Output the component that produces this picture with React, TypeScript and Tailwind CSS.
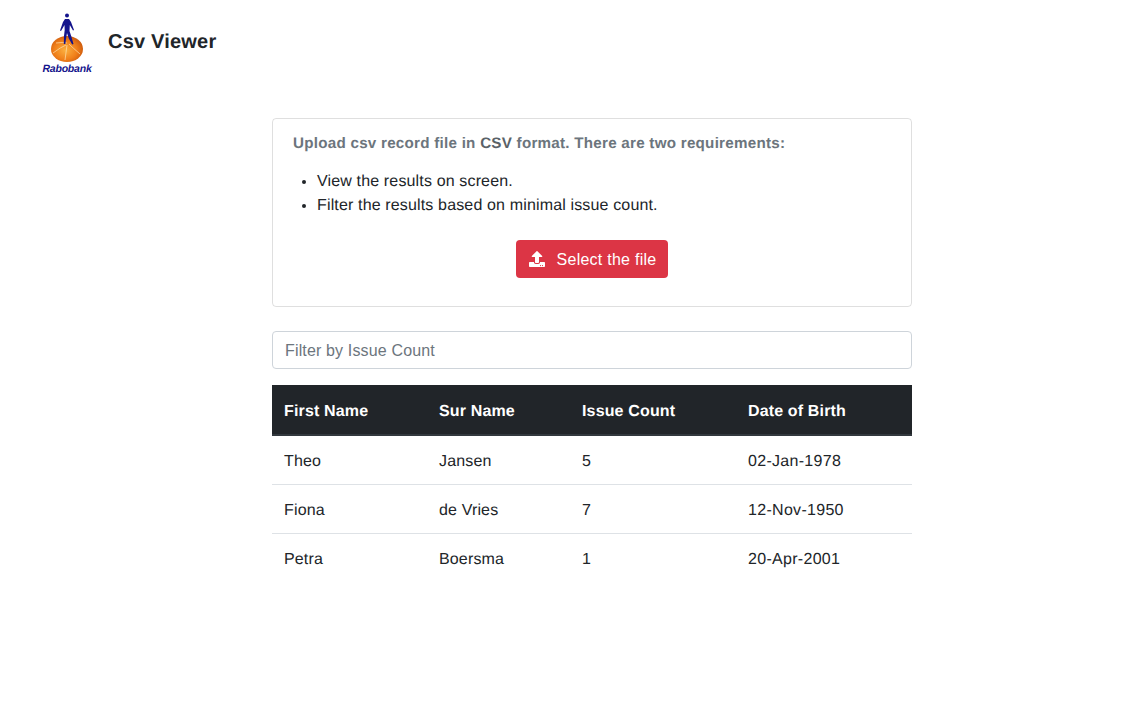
import { FaUpload } from 'react-icons/fa';

const ROWS = [
  { firstName: 'Theo', surName: 'Jansen', issueCount: 5, dob: '02-Jan-1978' },
  { firstName: 'Fiona', surName: 'de Vries', issueCount: 7, dob: '12-Nov-1950' },
  { firstName: 'Petra', surName: 'Boersma', issueCount: 1, dob: '20-Apr-2001' },
];

function RabobankLogo() {
  return (
    <div className="flex w-[48px] flex-col items-center">
      <svg width="36" height="49" viewBox="0 0 36 49">
        <defs>
          <radialGradient id="disc" cx="45%" cy="55%" r="60%">
            <stop offset="0%" stopColor="#fbb040" />
            <stop offset="60%" stopColor="#f07f1a" />
            <stop offset="100%" stopColor="#c9560c" />
          </radialGradient>
        </defs>
        <ellipse cx="18" cy="36" rx="16" ry="13" fill="url(#disc)" />
        <path d="M4 40 Q12 34 17 32 M31 41 Q24 35 20 31 M7 30 Q14 29 18 30 M18 32 L16 47" stroke="#fde3b0" strokeWidth="0.7" fill="none" />
        <circle cx="18" cy="2.6" r="2" fill="#14148c" />
        <path
          d="M16 6 L20 6 L22 9 L25 17 L24 17.5 L20.8 12 L20.5 18 L22.5 24 L24.5 31 L23.2 31.5 L19.8 25.5 L18 20 L17 26 L16.3 31 L14.8 31 L15 23 L15.7 17 L15.5 12 L12 18 L11 17.5 L14 9 Z"
          fill="#14148c"
        />
      </svg>
      <span className="mt-[1px] text-[10.5px] leading-[12px] font-bold tracking-[-0.2px] text-[#14148c] italic">Rabobank</span>
    </div>
  );
}

export default function App() {
  return (
    <div className="min-h-[723px] bg-white font-['Liberation_Sans',Arial,sans-serif] text-[16px] leading-[24px] tracking-[0.15px] text-[#212529] [text-rendering:geometricPrecision]">
      <header className="flex items-start pt-[13px] pl-[43px]">
        <RabobankLogo />
        <h1 className="mt-[17px] ml-[17px] text-[20px] leading-[24px] font-bold tracking-[0.2px]">Csv Viewer</h1>
      </header>

      <main className="mt-[43px] ml-[272px] w-[640px]">
        <section className="h-[189px] rounded-[4px] border border-[rgba(0,0,0,0.125)] px-[20px] pt-[12px]">
          <p className="pt-[1px] text-[15.2px] font-bold tracking-[0.25px] text-[#6c757d]">
            Upload csv record file in <span className="text-[#5a6268]">CSV</span> format. There are two requirements:
          </p>
          <ul className="mt-[14px] list-disc pl-[24px]">
            <li>View the results on screen.</li>
            <li>Filter the results based on minimal issue count.</li>
          </ul>
          <div className="mt-[22px] flex justify-center">
            <button className="flex h-[38px] w-[152px] items-center justify-center gap-[12px] rounded-[4px] bg-[#dc3545] pl-[1px] tracking-[0.25px] text-white">
              <FaUpload className="h-[16px] w-[16px]" />
              <span className="pt-[2px]">Select the file</span>
            </button>
          </div>
        </section>

        <input
          placeholder="Filter by Issue Count"
          className="mt-[24px] block h-[38px] w-full rounded-[4px] border border-[#ced4da] px-[12px] pt-[2px] placeholder:text-[#6c757d]"
        />

        <table className="mt-[16px] w-full table-fixed border-collapse">
          <thead>
            <tr className="h-[50px] border-b-2 border-[#32383e] bg-[#212529] text-left text-white">
              <th className="w-[155px] px-[12px] pt-[4px] font-bold">First Name</th>
              <th className="w-[143px] px-[12px] pt-[4px] font-bold">Sur Name</th>
              <th className="w-[166px] px-[12px] pt-[4px] font-bold">Issue Count</th>
              <th className="px-[12px] pt-[4px] font-bold">Date of Birth</th>
            </tr>
          </thead>
          <tbody>
            {ROWS.map((row, i) => (
              <tr key={row.firstName} className={i > 0 ? 'h-[49px] border-t border-[#dee2e6]' : 'h-[49px]'}>
                <td className="px-[12px] pt-[4px]">{row.firstName}</td>
                <td className="px-[12px] pt-[4px]">{row.surName}</td>
                <td className="px-[12px] pt-[4px]">{row.issueCount}</td>
                <td className="px-[12px] pt-[4px] tracking-[0.3px]">{row.dob}</td>
              </tr>
            ))}
          </tbody>
        </table>
      </main>
    </div>
  );
}
